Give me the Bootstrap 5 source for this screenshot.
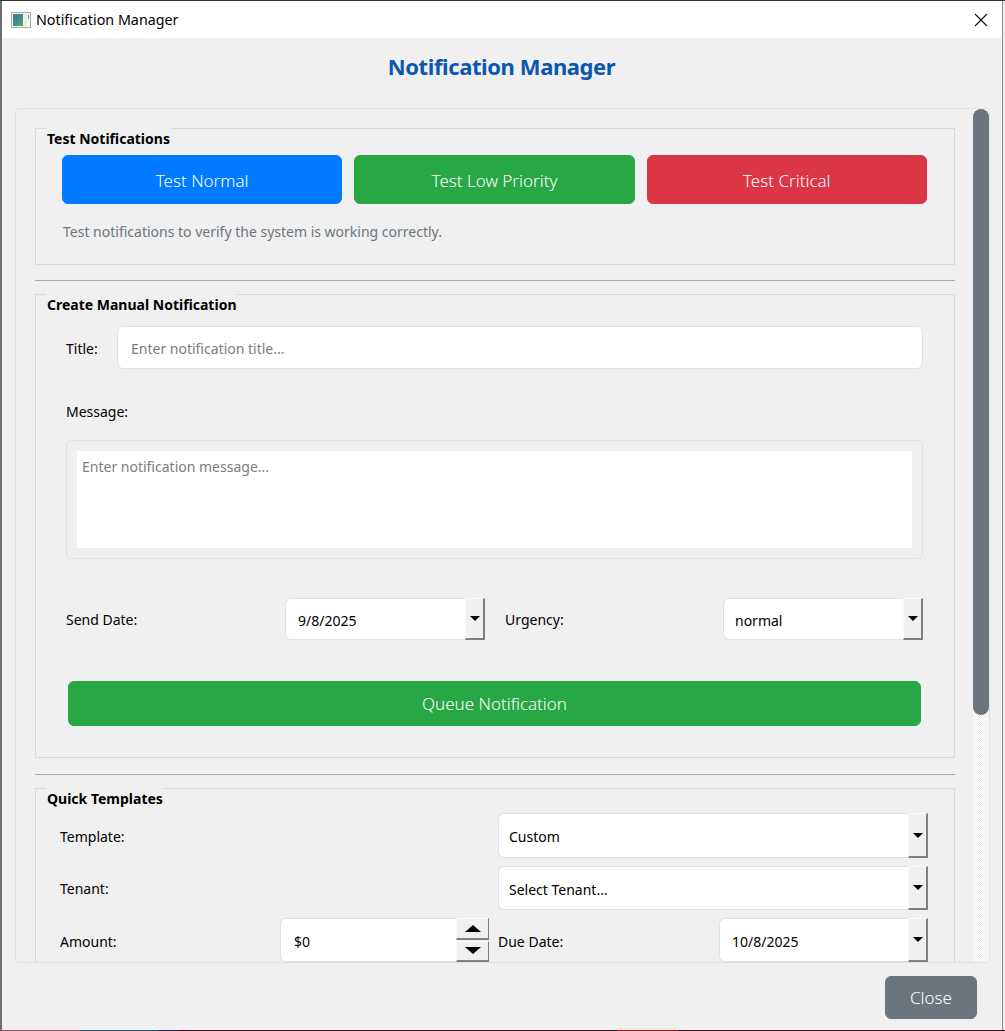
<!DOCTYPE html>
<html lang="en">
<head>
<meta charset="utf-8">
<title>Notification Manager</title>
<link href="https://cdn.jsdelivr.net/npm/bootstrap@5.3.0/dist/css/bootstrap.min.css" rel="stylesheet">
<style>
html,body{height:100%;overflow:hidden;background:#f0f0f0;}
body{font-family:"Noto Sans","Open Sans",sans-serif;font-size:14px;color:#000;}
.win{width:1005px;height:1031px;display:flex;flex-direction:column;border-top:1px solid #333;}
.win-inner{flex:1;min-height:0;display:flex;flex-direction:column;margin-right:2px;border-left:2px solid #6e6e6e;border-right:1px solid #8a8a8a;background:#f0f0f0;}
.desk{height:1px;flex:none;background:linear-gradient(90deg,#8b5a68 0 80px,#2a4a6e 80px 158px,#241f50 158px 178px,#3a0f1c 178px 617px,#a01825 617px 678px,#3a0f1c 678px);}
.tbar{height:37px;flex:none;background:#fff;padding-left:9px;padding-right:13px;}
.tbar-title{font-size:14.3px;margin-left:5px;}
.heading{height:70px;flex:none;font-size:22px;font-weight:700;color:#0b57b0;letter-spacing:-.4px;padding-right:1px;padding-bottom:14px;}
.scroller{height:855px;flex:none;margin:0 12px 0 13px;border:1px solid #dee2e6;border-radius:4px;display:flex;overflow:hidden;}
.content{flex:1;min-width:0;overflow:hidden;padding:19px 18px 0 19px;}
.track{width:16px;flex:none;background-color:#f4f4f4;background-image:repeating-conic-gradient(#fff 0 25%,#ececec 0 50%);background-size:2px 2px;}
.thumb{height:606px;background:#6c757d;border-radius:8px;}
.grp{border:1px solid #d9d9d9;}
.grp-name{display:table;margin:-1px 0 0 10px;padding:0 1px;background:#f0f0f0;font-weight:700;font-size:14px;line-height:21px;}
.rule{height:1px;background:#a9a9a9;margin:15px 0 13px;}
.rule.after-form{margin-top:16px;}
.act{height:49px;font-size:17px;font-weight:300;border-radius:6px;color:#fff;padding:2px 0 0;flex:1 1 0;}
.btn-primary.act{background:#007bff;border-color:#007bff;}
.btn-success.act,.btn-success.wide{background:#28a745;border-color:#28a745;color:#fff;}
.btn-danger.act{background:#dc3545;border-color:#dc3545;}
.hint{color:#6c757d;margin:18px 0 0 27px;line-height:20px;}
.box1{height:137px;}
.box1 .acts{padding:6px 27px 0 26px;gap:12px;}
.box2{height:464px;}
.fld{height:43px;border:1px solid #dee2e6;border-radius:6px;background:#fff;font-size:14px;padding:2px 12px 0;box-shadow:none;color:#000;}
.fld::placeholder,.memo::placeholder{color:#7d7d7d;opacity:1;}
.pad10{padding-left:10px;}
.pad11{padding-left:11px;}
.pad13{padding-left:13px;}
.lbl{line-height:20px;}
.row-title{padding:11px 31px 0 30px;}
.row-title .lbl{width:51px;flex:none;padding-top:2px;}
.row-title .fld{flex:1;min-width:0;}
.lbl-msg{margin:33px 0 18px 30px;}
.memo-wrap{margin:0 31px 0 30px;height:119px;border:1px solid #dee2e6;border-radius:6px;padding:10px;}
.memo{display:block;width:100%;height:97px;border:0;border-radius:0;background:#fff;padding:6px 5px;font-size:14px;line-height:20px;resize:none;outline:0;}
.row-date{padding:39px 31px 0 30px;height:81px;}
.row-date .lbl{flex:none;padding-top:2px;}
.combo{display:flex;height:42px;flex:none;}
.combo .fld{flex:1;min-width:0;height:42px;border-right:0;border-radius:6px 0 0 6px;}
.drop{width:20px;flex:none;padding:0;border:1px solid;border-color:#fafafa #7f7f7f #7f7f7f #fafafa;border-width:1px 2px 2px 1px;border-radius:0;background:#f0f0f0;display:flex;align-items:center;justify-content:center;}
.drop::after{content:"";border:5px solid transparent;border-top:5px solid #000;border-bottom:0;}
.w200{width:200px;}
.mid-gap{width:20px;flex:none;}
.wide{display:block;height:45px;margin:41px 33px 0 32px;width:calc(100% - 65px);font-size:17px;font-weight:300;border-radius:6px;padding:0;}
.box3{height:300px;}
.row3{display:flex;align-items:center;padding:0 26px 0 24px;margin-bottom:8px;}
.row3 .lbl{flex:none;padding-top:2px;}
.row3 .lbl.low{padding-top:4px;}
.l-438{width:438px;}
.combo.h45{height:45px;}
.combo.h45 .fld{height:45px;}
.combo.h44{height:44px;}
.combo.h44 .fld{height:44px;}
.spin{width:33px;flex:none;display:flex;flex-direction:column;height:44px;gap:1px;}
.spin span{flex:1;background:#f0f0f0;border:1px solid;border-color:#fafafa #7f7f7f #7f7f7f #fafafa;border-width:1px 1px 2px 1px;display:flex;align-items:center;justify-content:center;}
.up::after{content:"";border:8px solid transparent;border-bottom:7px solid #000;border-top:0;}
.dn::after{content:"";border:8px solid transparent;border-top:7px solid #000;border-bottom:0;}
.foot{flex:1;min-height:0;padding:13px 25px 0 0;}
.closer{width:92px;height:43px;background:#6c757d;border-color:#6c757d;color:#fff;font-size:17px;font-weight:300;border-radius:6px;padding:0;}
</style>
</head>
<body>
<div class="win">
  <div class="win-inner">
    <div class="tbar d-flex align-items-center">
      <svg width="20" height="16" viewBox="0 0 20 16" aria-hidden="true">
        <defs><linearGradient id="ic" x1="0" y1="0" x2="1" y2="1"><stop offset="0" stop-color="#3d78a0"/><stop offset=".55" stop-color="#3f8f88"/><stop offset="1" stop-color="#62a860"/></linearGradient></defs>
        <rect x=".5" y=".5" width="19" height="15" fill="#f4f4f4" stroke="#ababab"/>
        <rect x="2" y="2" width="10" height="12" fill="url(#ic)"/>
        <rect x="13" y="2" width="3" height="12" fill="#e4ecea"/>
        <rect x="17" y="3" width="1" height="4" fill="#5f9a96"/>
      </svg>
      <span class="tbar-title">Notification Manager</span>
      <svg class="ms-auto" width="16" height="16" viewBox="0 0 16 16" aria-hidden="true"><path d="M2 2 14 14M14 2 2 14" stroke="#111" stroke-width="1.1" fill="none"/></svg>
    </div>
    <div class="heading d-flex align-items-center justify-content-center">Notification Manager</div>
    <div class="scroller">
      <div class="content">
        <div class="grp box1">
          <div class="grp-name">Test Notifications</div>
          <div class="acts d-flex">
            <button class="btn btn-primary act">Test Normal</button>
            <button class="btn btn-success act">Test Low Priority</button>
            <button class="btn btn-danger act">Test Critical</button>
          </div>
          <div class="hint">Test notifications to verify the system is working correctly.</div>
        </div>
        <div class="rule"></div>
        <div class="grp box2">
          <div class="grp-name">Create Manual Notification</div>
          <div class="row-title d-flex align-items-center">
            <span class="lbl">Title:</span>
            <input class="form-control fld pad13" type="text" placeholder="Enter notification title...">
          </div>
          <div class="lbl lbl-msg">Message:</div>
          <div class="memo-wrap"><textarea class="memo" placeholder="Enter notification message..."></textarea></div>
          <div class="row-date d-flex align-items-center">
            <span class="lbl" style="width:219px">Send Date:</span>
            <div class="combo w200"><input class="form-control fld" value="9/8/2025"><button class="drop" aria-label="Open"></button></div>
            <span class="mid-gap"></span>
            <span class="lbl" style="width:218px">Urgency:</span>
            <div class="combo w200"><input class="form-control fld pad11" value="normal"><button class="drop" aria-label="Open"></button></div>
          </div>
          <button class="btn btn-success wide">Queue Notification</button>
        </div>
        <div class="rule after-form"></div>
        <div class="grp box3">
          <div class="grp-name">Quick Templates</div>
          <div class="row3" style="margin-top:4px">
            <span class="lbl l-438">Template:</span>
            <div class="combo h45 flex-fill"><input class="form-control fld pad10" value="Custom"><button class="drop" aria-label="Open"></button></div>
          </div>
          <div class="row3">
            <span class="lbl l-438">Tenant:</span>
            <div class="combo h44 flex-fill"><input class="form-control fld pad10" value="Select Tenant..."><button class="drop" aria-label="Open"></button></div>
          </div>
          <div class="row3">
            <span class="lbl low" style="width:220px">Amount:</span>
            <div class="combo h44" style="width:209px"><input class="form-control fld pad13" value="$0"><div class="spin"><span class="up"></span><span class="dn"></span></div></div>
            <span class="lbl low" style="width:221px;margin-left:9px">Due Date:</span>
            <div class="combo h44 flex-fill"><input class="form-control fld" value="10/8/2025"><button class="drop" aria-label="Open"></button></div>
          </div>
        </div>
      </div>
      <div class="track"><div class="thumb"></div></div>
    </div>
    <div class="foot d-flex justify-content-end align-items-start">
      <button class="btn btn-secondary closer">Close</button>
    </div>
  </div>
  <div class="desk"></div>
</div>
<script src="https://cdn.jsdelivr.net/npm/bootstrap@5.3.0/dist/js/bootstrap.bundle.min.js"></script>
</body>
</html>
